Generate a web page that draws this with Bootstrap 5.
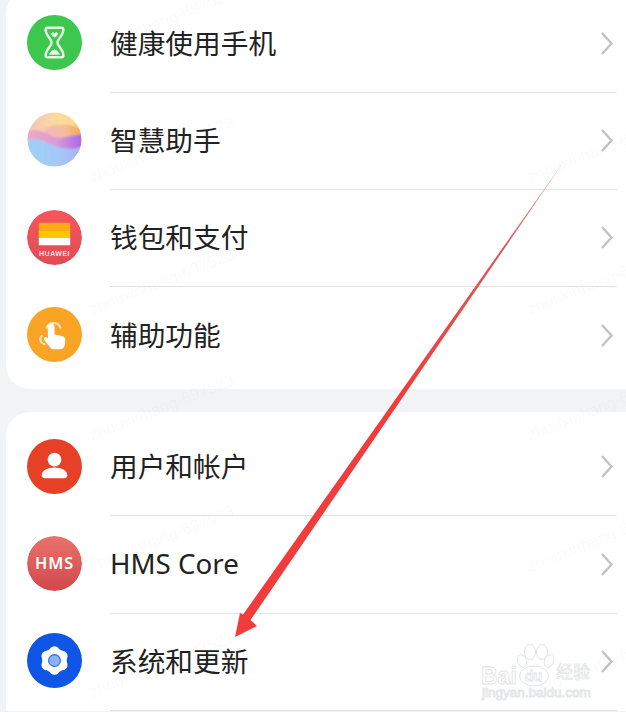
<!DOCTYPE html>
<html lang="zh">
<head>
  <meta charset="utf-8">
  <title>设置</title>
  <link href="https://cdn.jsdelivr.net/npm/bootstrap@5.3.2/dist/css/bootstrap.min.css" rel="stylesheet">
  <style>
    html, body { height: 712px; overflow: hidden; }
    body { background: #f1f3f5; font-family: "Noto Sans CJK SC", "Noto Sans", sans-serif; }
    .screen { height: 712px; overflow: hidden; padding-left: 6px; }
    .set-group { background: #fff; border-radius: 24px 0 0 24px; padding-top: 6px; }
    .set-group.first { margin-top: -10.5px; padding-bottom: 4.6px; }
    .set-group.second { margin-top: 22.4px; padding-top: 7.5px; border-bottom-left-radius: 0; }
    .set-row { height: 97.3px; padding-left: 20.7px; }
    .set-icon { width: 55px; height: 55px; flex: none; border-radius: 50%; margin-bottom: 3px; }
    .set-icon svg { display: block; width: 55px; height: 55px; }
    .set-body { height: 100%; margin-left: 28.300px; margin-right: 9px; border-bottom: 1px solid #e2e3e5; }
    .set-body.no-line { border-bottom: 0; }
    .set-label { font-size: 27.7px; line-height: 1; color: #222; margin-bottom: 2px; }
    .latin { font-family: "Noto Sans", sans-serif; font-size: 27.7px; }
    .chev { flex: none; margin-right: 3px; margin-bottom: 1px; }
    .overlay { position: absolute; top: 0; left: 0; pointer-events: none; }
    .wm-text { font-family: "Liberation Sans", sans-serif; font-size: 16.5px; fill: #000; opacity: .014; }
    .bd-text { font-family: "Liberation Sans", sans-serif; fill: #fff; stroke: #e2e4e6; stroke-width: .9; }
    .bd-cjk { font-family: "Noto Sans CJK SC", sans-serif; fill: #fff; stroke: #e2e4e6; stroke-width: .7; }
  </style>
</head>
<body>
<div class="screen position-relative">

  <div class="set-group first">
    <div class="set-row d-flex align-items-center">
      <div class="set-icon" style="background:#3ec74e">
        <svg viewBox="0 0 56 56" fill="none" stroke="#e6f8e8" stroke-width="2.5" stroke-linejoin="round">
          <path d="M21 13h14a2 2 0 0 1 2 2c0 6-6 9-6 13s6 7 6 13a2 2 0 0 1-2 2H21a2 2 0 0 1-2-2c0-6 6-9 6-13s-6-7-6-13a2 2 0 0 1 2-2z"/>
          <path d="M25 18.500c1-1 2-.5 3 .5 1-1 2-1.500 3-.5 1 1-1 3-3 4-2-1-4-3-3-4zM23 40c1-2.500 3-4 5-4.500 2 .5 4 2 5 4.500z" fill="#e6f8e8" stroke-width=".8"/>
        </svg>
      </div>
      <div class="set-body flex-grow-1 d-flex align-items-center justify-content-between">
        <span class="set-label">健康使用手机</span>
        <svg class="chev" width="14" height="25" viewBox="0 0 14 25" fill="none" stroke="#c2c2c2" stroke-width="2.400"><path d="M2 2l9.500 10.500L2 23"/></svg>
      </div>
    </div>
    <div class="set-row d-flex align-items-center">
      <div class="set-icon overflow-hidden">
        <svg viewBox="0 0 56 56">
          <defs>
            <clipPath id="orb"><circle cx="28" cy="28" r="27.500"/></clipPath>
            <filter id="soft"><feGaussianBlur stdDeviation=".9"/></filter>
            <linearGradient id="orbA" x1="0" y1="0" x2="1" y2="0"><stop offset="0" stop-color="#f4c4bc"/><stop offset=".6" stop-color="#fbdc9c"/><stop offset="1" stop-color="#fbd68a"/></linearGradient>
            <linearGradient id="orbB" x1="0" y1="0" x2="1" y2="0"><stop offset="0" stop-color="#f3b6c0"/><stop offset=".5" stop-color="#f4bf9c"/><stop offset="1" stop-color="#f4a94e"/></linearGradient>
            <linearGradient id="orbC" x1="0" y1="0" x2="1" y2="0"><stop offset="0" stop-color="#f0a8c0"/><stop offset=".55" stop-color="#d99ad8"/><stop offset="1" stop-color="#a966e6"/></linearGradient>
            <linearGradient id="orbD" x1="0" y1="0" x2="1" y2="0"><stop offset="0" stop-color="#9ed0f6"/><stop offset=".6" stop-color="#a4c8f6"/><stop offset="1" stop-color="#b0b0f4"/></linearGradient>
          </defs>
          <g clip-path="url(#orb)">
            <rect width="56" height="56" fill="url(#orbA)"/>
            <g filter="url(#soft)">
              <path d="M18 18c8-6 14-4 20-5 6 0 12 2 18 4v12H20z" fill="url(#orbB)"/>
              <path d="M0 20c8-3 14-1 20 2 6 3 10 5 16 4 8-1 14-3 20-3v33H0z" fill="url(#orbC)"/>
              <path d="M0 29c8-3 14-1 20 2 6 3 12 5 18 6 7 1 13 0 18-2v21H0z" fill="url(#orbD)"/>
            </g>
          </g>
        </svg>
      </div>
      <div class="set-body flex-grow-1 d-flex align-items-center justify-content-between">
        <span class="set-label">智慧助手</span>
        <svg class="chev" width="14" height="25" viewBox="0 0 14 25" fill="none" stroke="#c2c2c2" stroke-width="2.400"><path d="M2 2l9.500 10.500L2 23"/></svg>
      </div>
    </div>
    <div class="set-row d-flex align-items-center">
      <div class="set-icon overflow-hidden">
        <svg viewBox="0 0 56 56">
          <defs><linearGradient id="wal" x1="0" y1="0" x2="0" y2="1"><stop offset="0" stop-color="#f6565c"/><stop offset="1" stop-color="#e04c54"/></linearGradient></defs>
          <circle cx="28" cy="28" r="28" fill="url(#wal)"/>
          <path d="M12 15a2 2 0 0 1 2-2h28a2 2 0 0 1 2 2v6H12z" fill="#ffa914"/>
          <rect x="12" y="21" width="32" height="7.500" fill="#ffc800"/>
          <path d="M12 28.500h32V36H12z" fill="#fff"/>
          <text x="28" y="46.500" text-anchor="middle" font-family="Liberation Sans, sans-serif" font-size="7.200" font-weight="700" fill="#fbdcdc" letter-spacing=".45">HUAWEI</text>
        </svg>
      </div>
      <div class="set-body flex-grow-1 d-flex align-items-center justify-content-between">
        <span class="set-label">钱包和支付</span>
        <svg class="chev" width="14" height="25" viewBox="0 0 14 25" fill="none" stroke="#c2c2c2" stroke-width="2.400"><path d="M2 2l9.500 10.500L2 23"/></svg>
      </div>
    </div>
    <div class="set-row d-flex align-items-center">
      <div class="set-icon" style="background:#f9a424">
        <svg viewBox="0 0 56 56">
          <path d="M20 21a7.500 7.500 0 0 1 14 0" fill="none" stroke="#fde6bf" stroke-width="2" stroke-linecap="round"/>
          <path d="M18 38c-2.500-1-4.500-3-4.500-5.500 0-1 .5-2 1.500-3" fill="none" stroke="#fde6bf" stroke-width="2" stroke-linecap="round"/>
          <path d="M21 20.500a3.500 3.500 0 0 1 7 0v7.500l7.500 1.500c2 .4 3.500 2 3.500 4l-.5 5c-.3 2.500-2 4.500-4.500 4.500h-7c-1.500 0-2.700-.7-3.500-2l-6-7.500c-1.300-2 1-3.800 3-2.500l1 1z" fill="#fff"/>
        </svg>
      </div>
      <div class="set-body no-line flex-grow-1 d-flex align-items-center justify-content-between">
        <span class="set-label">辅助功能</span>
        <svg class="chev" width="14" height="25" viewBox="0 0 14 25" fill="none" stroke="#c2c2c2" stroke-width="2.400"><path d="M2 2l9.500 10.500L2 23"/></svg>
      </div>
    </div>
  </div>

  <div class="set-group second">
    <div class="set-row d-flex align-items-center">
      <div class="set-icon" style="background:#e64027">
        <svg viewBox="0 0 56 56" fill="#fff">
          <circle cx="28" cy="21" r="7"/>
          <path d="M15 37c0-5 6-8 13-8s13 3 13 8c0 2-1.500 3-3 3H18c-1.500 0-3-1-3-3z"/>
        </svg>
      </div>
      <div class="set-body flex-grow-1 d-flex align-items-center justify-content-between">
        <span class="set-label">用户和帐户</span>
        <svg class="chev" width="14" height="25" viewBox="0 0 14 25" fill="none" stroke="#c2c2c2" stroke-width="2.400"><path d="M2 2l9.500 10.500L2 23"/></svg>
      </div>
    </div>
    <div class="set-row d-flex align-items-center">
      <div class="set-icon overflow-hidden">
        <svg viewBox="0 0 56 56">
          <defs><linearGradient id="hms" x1="0" y1="0" x2="0" y2="1"><stop offset="0" stop-color="#e8736b"/><stop offset="1" stop-color="#d2484b"/></linearGradient></defs>
          <circle cx="28" cy="28" r="28" fill="url(#hms)"/>
          <text x="28" y="34" text-anchor="middle" font-family="Noto Sans, sans-serif" font-size="16.500" font-weight="600" fill="#fff" letter-spacing="1">HMS</text>
        </svg>
      </div>
      <div class="set-body flex-grow-1 d-flex align-items-center justify-content-between">
        <span class="set-label latin">HMS Core</span>
        <svg class="chev" width="14" height="25" viewBox="0 0 14 25" fill="none" stroke="#c2c2c2" stroke-width="2.400"><path d="M2 2l9.500 10.500L2 23"/></svg>
      </div>
    </div>
    <div class="set-row d-flex align-items-center">
      <div class="set-icon" style="background:#0f55e6">
        <svg viewBox="0 0 56 56">
          <g fill="#fff">
            <circle cx="28" cy="28" r="12.500"/>
            <circle cx="28" cy="19" r="5.500"/>
            <circle cx="28" cy="37" r="5.500"/>
            <circle cx="20.200" cy="23.500" r="5.500"/>
            <circle cx="35.800" cy="23.500" r="5.500"/>
            <circle cx="20.200" cy="32.500" r="5.500"/>
            <circle cx="35.800" cy="32.500" r="5.500"/>
          </g>
          <circle cx="28" cy="28" r="6" fill="#8cb2f5" stroke="#2f6ce8" stroke-width="1.200"/>
        </svg>
      </div>
      <div class="set-body flex-grow-1 d-flex align-items-center justify-content-between">
        <span class="set-label">系统和更新</span>
        <svg class="chev" width="14" height="25" viewBox="0 0 14 25" fill="none" stroke="#c2c2c2" stroke-width="2.400"><path d="M2 2l9.500 10.500L2 23"/></svg>
      </div>
    </div>
  </div>

  <!-- watermark, arrow and logo sit on top of the list -->
  <svg class="overlay" width="626" height="712" viewBox="0 0 626 712">
    <g>
      <text class="wm-text" transform="translate(92 55) rotate(-21.600)">zhouxinhang-697523</text>
      <text class="wm-text" transform="translate(92 183) rotate(-21.600)">zhouxinhang-697523</text>
      <text class="wm-text" transform="translate(92 315) rotate(-21.600)">zhouxinhang-697523</text>
      <text class="wm-text" transform="translate(92 441) rotate(-21.600)">zhouxinhang-697523</text>
      <text class="wm-text" transform="translate(92 572) rotate(-21.600)">zhouxinhang-697523</text>
      <text class="wm-text" transform="translate(92 698) rotate(-21.600)">zhouxinhang-697523</text>
      <text class="wm-text" transform="translate(530 183) rotate(-21.600)">zhouxinhang-697523</text>
      <text class="wm-text" transform="translate(530 315) rotate(-21.600)">zhouxinhang-697523</text>
      <text class="wm-text" transform="translate(530 441) rotate(-21.600)">zhouxinhang-697523</text>
      <text class="wm-text" transform="translate(530 572) rotate(-21.600)">zhouxinhang-697523</text>
      <text class="wm-text" transform="translate(530 698) rotate(-21.600)">zhouxinhang-697523</text>
    </g>
    <defs><linearGradient id="arrowFade" gradientUnits="userSpaceOnUse" x1="567" y1="157" x2="400" y2="400"><stop offset="0" stop-color="#f3b4b4"/><stop offset=".35" stop-color="#d9595c"/><stop offset="1" stop-color="#f23b3b"/></linearGradient></defs>
    <path d="M567 157 L250.500 620 L257 626 L235 637 L240 613 L243 614.500 Z" fill="url(#arrowFade)"/>
    <g fill="#fff" stroke="#e2e4e6" stroke-width="1">
      <ellipse cx="530" cy="652" rx="5.500" ry="7.500"/>
      <ellipse cx="542" cy="652" rx="5.500" ry="7.500"/>
      <ellipse cx="522" cy="661" rx="4.500" ry="6.500" transform="rotate(-20 522 661)"/>
      <ellipse cx="549" cy="661" rx="4.500" ry="6.500" transform="rotate(20 549 661)"/>
    </g>
    <text class="bd-text" x="481" y="684" font-size="23" font-weight="700">Bai</text>
    <ellipse cx="534" cy="676" rx="14.500" ry="10" fill="#fff" stroke="#e2e4e6"/>
    <text class="bd-text" x="525" y="681" font-size="14" font-weight="700">du</text>
    <text class="bd-cjk" x="556" y="678" font-size="17">经验</text>
    <text class="bd-text" x="482" y="697" font-size="13.500" stroke-width=".5">jingyan.baidu.com</text>
  </svg>
</div>
<script src="https://cdn.jsdelivr.net/npm/bootstrap@5.3.2/dist/js/bootstrap.bundle.min.js"></script>
</body>
</html>
